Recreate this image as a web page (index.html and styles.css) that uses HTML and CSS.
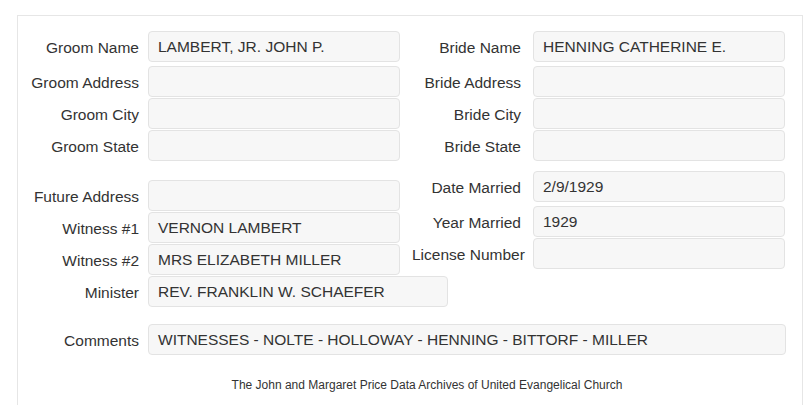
FILE: index.html
```html
<!DOCTYPE html>
<html lang="en">
<head>
    <meta charset="UTF-8">
    <meta name="viewport" content="width=device-width, initial-scale=1.0">
    <title>Marriage Record</title>
    <link rel="stylesheet" href="styles.css">
</head>
<body>
    <div class="record">
        <div class="pair">
            <div class="col col-left">
                <div class="row row-first"><span class="label">Groom Name</span><span class="field">LAMBERT, JR. JOHN P.</span></div>
                <div class="row"><span class="label">Groom Address</span><span class="field"></span></div>
                <div class="row"><span class="label">Groom City</span><span class="field"></span></div>
                <div class="row"><span class="label">Groom State</span><span class="field"></span></div>
            </div>
            <div class="col col-right">
                <div class="row row-first"><span class="label">Bride Name</span><span class="field">HENNING CATHERINE E.</span></div>
                <div class="row"><span class="label">Bride Address</span><span class="field"></span></div>
                <div class="row"><span class="label">Bride City</span><span class="field"></span></div>
                <div class="row"><span class="label">Bride State</span><span class="field"></span></div>
            </div>
        </div>

        <div class="pair">
            <div class="col col-left lower-left">
                <div class="row"><span class="label">Future Address</span><span class="field"></span></div>
                <div class="row"><span class="label">Witness #1</span><span class="field">VERNON LAMBERT</span></div>
                <div class="row"><span class="label">Witness #2</span><span class="field">MRS ELIZABETH MILLER</span></div>
                <div class="row row-wide"><span class="label">Minister</span><span class="field">REV. FRANKLIN W. SCHAEFER</span></div>
            </div>
            <div class="col col-right lower-right">
                <div class="row row-first"><span class="label">Date Married</span><span class="field">2/9/1929</span></div>
                <div class="row"><span class="label">Year Married</span><span class="field">1929</span></div>
                <div class="row"><span class="label">License Number</span><span class="field"></span></div>
            </div>
        </div>

        <div class="row row-comments"><span class="label">Comments</span><span class="field">WITNESSES - NOLTE - HOLLOWAY - HENNING - BITTORF - MILLER</span></div>

        <p class="footer">The John and Margaret Price Data Archives of United Evangelical Church</p>
    </div>
</body>
</html>
```

FILE: styles.css
```css
body {
    margin: 0;
    background: #fff;
    font-family: "Liberation Sans", Arial, sans-serif;
    font-size: 15.5px;
    color: #333;
}

.record {
    margin: 15px 2px 0 17px;
    border: 1px solid #e6e6e6;
    border-bottom: none;
    height: 390px;
    padding-top: 15px;
    box-sizing: border-box;
}

.pair {
    display: flex;
}

.col {
    display: flex;
    flex-direction: column;
    gap: 1px;
}
.col-left { width: 383px; }
.col-right { flex: 1; }

.row {
    display: grid;
    height: 31px;
    align-items: center;
}
.row-first { margin-bottom: 3px; }

.col-left .row,
.row-comments {
    grid-template-columns: 121px 252px;
    column-gap: 9px;
}
.col-right .row {
    grid-template-columns: 109px 252px;
    column-gap: 12px;
    padding-left: 11px;
}
.col-left .row-wide {
    grid-template-columns: 121px 300px;
}
.row-comments {
    grid-template-columns: 121px 638px;
    margin-top: 17px;
}

.label {
    text-align: right;
    white-space: nowrap;
    padding-top: 3px;
}

.field {
    box-sizing: border-box;
    height: 31px;
    display: flex;
    align-items: center;
    padding: 0 9px;
    background: #f7f7f7;
    border: 1px solid #e3e3e3;
    border-radius: 4px;
    white-space: nowrap;
}

.lower-left { margin-top: 19px; }
.lower-right { margin-top: 10px; }

.footer {
    margin: 23px 0 0;
    padding-left: 34px;
    text-align: center;
    font-size: 12px;
    color: #333;
}
```
